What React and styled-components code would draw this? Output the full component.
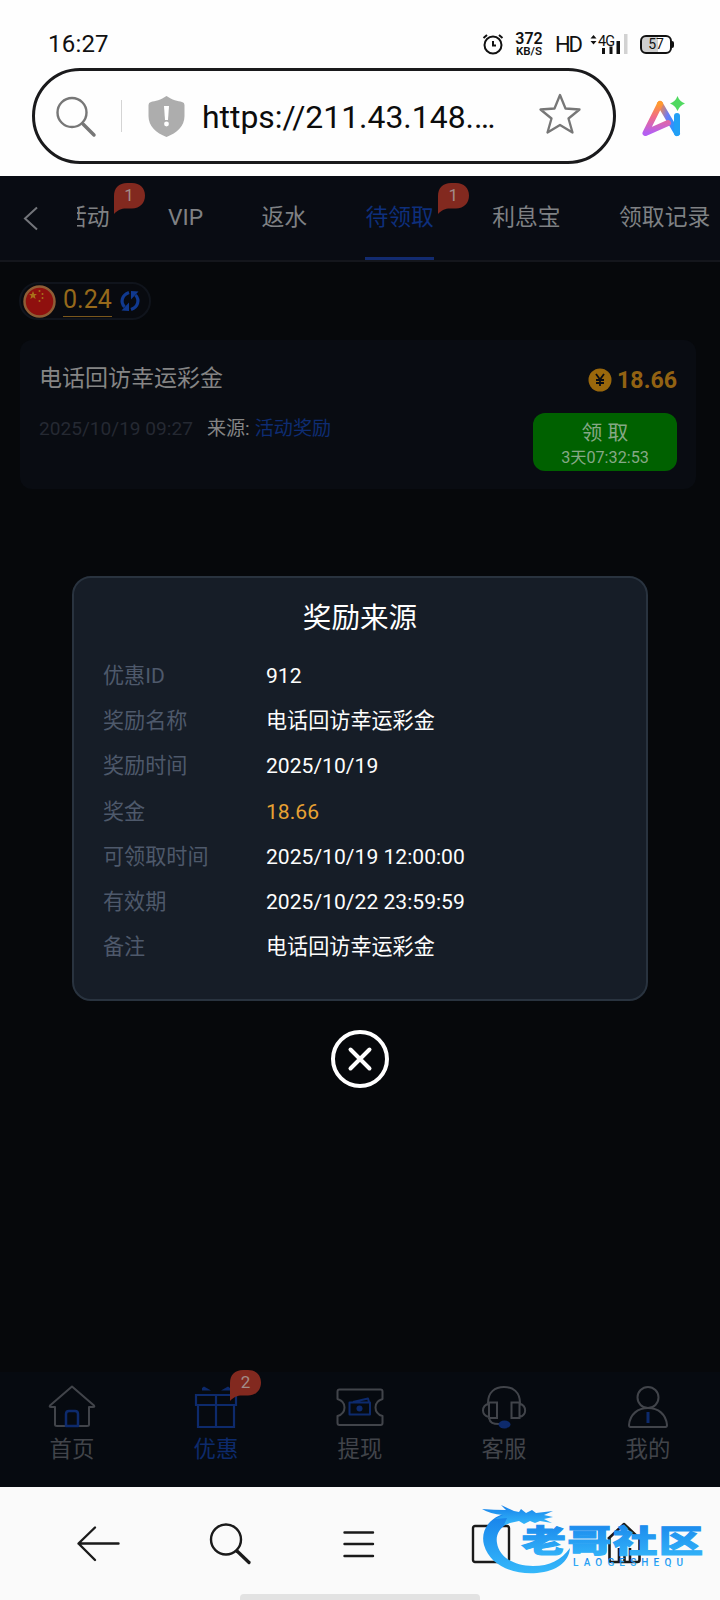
import styled, { createGlobalStyle } from "styled-components"

const GlobalStyle = createGlobalStyle`
    *{
        box-sizing: border-box;
    }
    body{
        margin: 0;
        background-color: #060709;
        font-family: Roboto, "Noto Sans CJK SC", sans-serif;
    }
    svg{
        display: block;
        overflow: visible;
    }
`

const Container = styled.div`
    width: 720px;
    height: 1600px;
    display: flex;
    flex-direction: column;
    overflow: hidden;
    position: relative;
`

/* phone status bar */
const StatusBar = styled.div`
    height: 68px;
    padding: 20px 46px 0 48px;
    display: flex;
    align-items: center;
    justify-content: space-between;
    background-color: #fefefe;
    color: #111;
`
const Clock = styled.div`
    font-size: 24px;
    letter-spacing: 0.2px;
`
const StatusIcons = styled.div`
    display: flex;
    align-items: center;
`
const Speed = styled.div`
    width: 28px;
    margin: 0 12px;
    text-align: center;
    font-size: 16px;
    font-weight: 600;
    line-height: 13px;
    small{
        display: block;
        font-size: 11.5px;
        line-height: 12px;
        white-space: nowrap;
    }
`
const Hd = styled.div`
    width: 26px;
    font-size: 22px;
    letter-spacing: -2.2px;
    margin-right: 9px;
`
const Battery = styled.div`
    width: 32px;
    height: 19px;
    margin-left: 12px;
    margin-right: 2px;
    border: 2px solid #111;
    border-radius: 6px;
    background: linear-gradient(90deg, #cfcfcf 57%, #fefefe 57%);
    font-size: 14px;
    line-height: 15px;
    text-align: center;
    position: relative;
    &:after{
        content: "";
        position: absolute;
        right: -4px;
        top: 4px;
        width: 2px;
        height: 7px;
        border-radius: 0 2px 2px 0;
        background-color: #111;
    }
`

/* browser address bar */
const AddressBar = styled.div`
    height: 108px;
    padding: 0 32px;
    display: flex;
    align-items: flex-start;
    background-color: #fefefe;
`
const UrlBox = styled.div`
    width: 584px;
    height: 96px;
    padding: 0 32px 0 20px;
    display: flex;
    align-items: center;
    border: 3px solid #1a1a1c;
    border-radius: 48px;
    svg:last-child{
        margin-bottom: 4px;
    }
`
const Divider = styled.div`
    width: 1px;
    height: 32px;
    margin: 0 26px 0 25px;
    background-color: #d4d4d4;
`
const Url = styled.div`
    flex: 1;
    margin-left: 17px;
    padding-top: 1px;
    font-size: 31.9px;
    line-height: 40px;
    color: #0c0c0c;
    white-space: nowrap;
`
const AiLogo = styled.div`
    margin: 28px 0 0 26px;
`

/* web page */
const Page = styled.div`
    height: 1311px;
    display: flex;
    flex-direction: column;
    position: relative;
    background-color: #06080b;
`
const TopBar = styled.div`
    height: 86px;
    display: flex;
    border-bottom: 2px solid #14161c;
    background-color: #090c13;
`
const BackButton = styled.div`
    width: 77px;
    padding: 31px 0 0 23px;
`
const Tabs = styled.div`
    flex: 1;
    display: flex;
    gap: 58.4px;
    padding-right: 10px;
    overflow: hidden;
`
const Tab = styled.div`
    flex: none;
    height: 84px;
    position: relative;
    margin-left: ${(props) => props.$shift || 0}px;
    font-size: 22.8px;
    line-height: 84px;
    white-space: nowrap;
    color: ${(props) => (props.$active ? "#0e2f7c" : "#7f8184")};
    border-bottom: 3px solid ${(props) => (props.$active ? "#122b70" : "transparent")};
`
const BadgeBox = styled.div`
    position: absolute;
    left: ${(props) => props.$left};
    top: ${(props) => props.$top}px;
    width: 31px;
    height: 31px;
    line-height: 0;
    color: #a38c89;
    svg{
        position: absolute;
        left: 0;
        top: 0;
    }
    span{
        display: block;
        position: relative;
        text-align: center;
        font-size: 17px;
        line-height: 25px;
    }
`
const Wallet = styled.div`
    width: 132px;
    height: 38px;
    margin: 20px 0 0 19px;
    padding-left: 2px;
    display: flex;
    align-items: center;
    border: 2px solid #10141c;
    border-radius: 19px;
    background-color: #080a0f;
`
const Balance = styled.div`
    margin: 0 8px 0 7px;
    height: 32px;
    font-size: 25px;
    line-height: 30px;
    color: #96691b;
    border-bottom: 1px solid #7a571c;
`
const Card = styled.div`
    width: 676px;
    height: 149px;
    margin: 20px 0 0 20px;
    padding: 0 19px;
    display: flex;
    justify-content: space-between;
    border-radius: 12px;
    background-color: #090c12;
`
const CardTitle = styled.div`
    margin-top: 22px;
    font-size: 23px;
    line-height: 34px;
    color: #858585;
`
const CardMeta = styled.div`
    display: flex;
    margin-top: 19px;
    font-size: 19.1px;
    line-height: 28px;
    color: #252932;
    span{
        margin: 0 5px 0 14px;
        color: #858585;
    }
    a{
        color: #0e2c72;
    }
`
const CardSide = styled.div`
    display: flex;
    flex-direction: column;
    align-items: flex-end;
`
const Amount = styled.div`
    display: flex;
    align-items: center;
    gap: 5px;
    height: 30px;
    margin-top: 24px;
    padding-top: 1px;
    font-size: 23.2px;
    font-weight: 700;
    color: #926212;
`
const ClaimButton = styled.button`
    width: 144px;
    height: 58px;
    margin-top: 19px;
    padding: 4px 0 0;
    border: none;
    border-radius: 12px;
    background-color: #006100;
    font-family: inherit;
    font-size: 20.8px;
    line-height: 27px;
    color: #86a886;
    small{
        display: block;
        font-size: 16.2px;
        line-height: 22px;
    }
`

/* reward dialog */
const Modal = styled.div`
    position: absolute;
    left: 72px;
    top: 400px;
    width: 576px;
    display: flex;
    flex-direction: column;
    align-items: center;
`
const Dialog = styled.div`
    width: 100%;
    height: 425px;
    padding: 21px 29px 0;
    border: 2px solid #29333f;
    border-radius: 19px;
    background-color: #161d27;
`
const DialogTitle = styled.div`
    height: 55px;
    font-size: 28.6px;
    line-height: 38px;
    text-align: center;
    color: #fff;
`
const Row = styled.div`
    display: flex;
    height: 45.2px;
    font-size: 21.1px;
    line-height: 44.6px;
`
const Label = styled.div`
    width: 163px;
    color: #4e596b;
`
const Value = styled.div`
    color: ${(props) => (props.$gold ? "#e8a233" : "#fdfdfd")};
`
const CloseButton = styled.div`
    margin-top: 28px;
`

/* site navigation */
const SiteNav = styled.div`
    height: 115px;
    margin-top: auto;
    display: flex;
    background-color: #060a10;
`
const NavItem = styled.div`
    width: 144px;
    padding-top: 13px;
    position: relative;
    display: flex;
    flex-direction: column;
    align-items: center;
    font-size: 22.4px;
    line-height: 30px;
    color: ${(props) => (props.$active ? "#0d2a6c" : "#41444a")};
    svg + div{
        margin-top: 6px;
    }
`

/* browser toolbar */
const Toolbar = styled.div`
    height: 113px;
    position: relative;
    display: flex;
    flex-direction: column;
    justify-content: space-between;
    align-items: center;
    background-color: #fafafa;
`
const ToolbarIcons = styled.div`
    width: 100%;
    padding: 34px 0 0 77px;
    display: grid;
    grid-template-columns: 132px 133px 129px 136px auto;
`
const HomeIndicator = styled.div`
    width: 240px;
    height: 6px;
    border-radius: 4px 4px 0 0;
    background-color: #e2e2e2;
`
const Watermark = styled.div`
    position: absolute;
    left: 460px;
    top: 3px;
`

const tabs = [
  { name: "活动", badge: 1, shift: -13 },
  { name: "VIP" },
  { name: "返水" },
  { name: "待领取", badge: 1, active: true },
  { name: "利息宝" },
  { name: "领取记录" },
]

const rows = [
  { label: "优惠ID", value: "912" },
  { label: "奖励名称", value: "电话回访幸运彩金" },
  { label: "奖励时间", value: "2025/10/19" },
  { label: "奖金", value: "18.66", gold: true },
  { label: "可领取时间", value: "2025/10/19 12:00:00" },
  { label: "有效期", value: "2025/10/22 23:59:59" },
  { label: "备注", value: "电话回访幸运彩金" },
]

const Badge = ({ left, top, children }) => (
  <BadgeBox $left={left} $top={top}>
    <svg width="31" height="32" fill="#82291f">
      <path d="M0 13C0 5 5 0 13 0H18C26 0 31 5 31 12.500C31 20 26 25.500 18 25.500H12C7 25.500 4 27 0 31Z" />
    </svg>
    <span>{children}</span>
  </BadgeBox>
)

const HomeIcon = () => (
  <svg width="48" height="43" fill="none" stroke="#41444a" strokeWidth="2" strokeLinejoin="round">
    <path d="M24 1.500L2 20.500Q1 22 3 22H7V39.500Q7 41 9 41H39Q41 41 41 39.500V22H45Q47 22 46 20.500Z" />
    <path d="M18 41V29Q18 26 21 26H27Q30 26 30 29V41Z" stroke="#0d2a6c" strokeWidth="2.500" />
  </svg>
)

const GiftIcon = () => (
  <svg width="44" height="43" fill="none" stroke="#0d2a6c" strokeWidth="2.200">
    <path d="M2 10H42V20H2ZM4 20V42H40V20M22 10V42" />
    <path d="M8 5.500V3L10 1.500L17 5.500ZM36 5.500V3L34 1.500L27 5.500Z" fill="#0d2a6c" stroke="none" />
  </svg>
)

const TicketIcon = () => (
  <svg width="48" height="43" fill="none" stroke="#41444a" strokeWidth="2" strokeLinejoin="round">
    <path d="M3.500 4.500H44.500Q46.500 4.500 46.500 6.500V14Q39.500 16 39.500 22.500Q39.500 29 46.500 31V38Q46.500 40 44.500 40H3.500Q1.500 40 1.500 38V31Q8.500 29 8.500 22.500Q8.500 16 1.500 14V6.500Q1.500 4.500 3.500 4.500Z" />
    <g stroke="#0d2a6c">
      <path d="M13.500 17.500H34V29.500H13.500ZM17 17L32 13.500L33 17" />
      <circle cx="23.500" cy="23.500" r="3" fill="#0d2a6c" stroke="none" />
    </g>
  </svg>
)

const ServiceIcon = () => (
  <svg width="44" height="43" fill="none" stroke="#41444a" strokeWidth="2">
    <path d="M6 18C6 7 13 2 22 2S38 7 38 18M7 33C8 38 11 39 17 39" />
    <path d="M7 17.500H15V33H7ZM29.500 17.500H37.500V33H29.500ZM7 18.500C-1 21 -1 30 7 32M37.500 18.500C45 21 45 30 37.500 32" />
    <ellipse cx="22.500" cy="39.500" rx="6" ry="4" fill="#0d2a6c" stroke="none" />
  </svg>
)

const UserIcon = () => (
  <svg width="40" height="43" fill="none" stroke="#41444a" strokeWidth="2">
    <circle cx="20" cy="12.500" r="10.500" />
    <path d="M2.500 42Q1 42 1 40C2 29 10 23 20 23S38 29 39 40Q39 42 37.500 42Z" strokeLinejoin="round" />
    <path d="M20 27V38" stroke="#0d2a6c" strokeWidth="3" />
  </svg>
)

const nav = [
  { name: "首页", icon: <HomeIcon /> },
  { name: "优惠", icon: <GiftIcon />, badge: 2, active: true },
  { name: "提现", icon: <TicketIcon /> },
  { name: "客服", icon: <ServiceIcon /> },
  { name: "我的", icon: <UserIcon /> },
]

const Status = () => (
  <StatusBar>
    <Clock>16:27</Clock>
    <StatusIcons>
      <svg width="20" height="20" fill="none" stroke="#111" strokeWidth="2">
        <circle cx="10" cy="11" r="8.500" />
        <path d="M10 7V11.500H13M0.500 4L4 1M19.500 4L16 1" />
      </svg>
      <Speed>
        372<small>KB/S</small>
      </Speed>
      <Hd>HD</Hd>
      <svg width="38" height="20" fill="#111">
        <path d="M0.500 4.500L3.500 1L6.500 4.500ZM0.500 7L3.500 10.500L6.500 7Z" />
        <text x="8" y="11.500" fontSize="14.500" letterSpacing="-1">4G</text>
        <rect x="12" y="14" width="3" height="6" />
        <rect x="19.500" y="12.500" width="3" height="7.500" />
        <rect x="26.500" y="7" width="3.500" height="13" />
        <rect x="34" y="0" width="3.500" height="20" fill="#d2d2d2" />
      </svg>
      <Battery>57</Battery>
    </StatusIcons>
  </StatusBar>
)

const Address = () => (
  <AddressBar>
    <UrlBox>
      <svg width="41" height="41" fill="none" stroke="#777" strokeWidth="2.400" strokeLinecap="round">
        <circle cx="17" cy="16.500" r="14.500" />
        <path d="M28 28L39 39" strokeWidth="3.500" />
      </svg>
      <Divider />
      <svg width="37" height="41" fill="#adadad">
        <path d="M18.500 0C13 4 7 5 3 6Q0.500 6.500 0.500 9V20C0.500 30 8 37 18.500 41C29 37 36.500 30 36.500 20V9Q36.500 6.500 34 6C30 5 24 4 18.500 0Z" />
        <path d="M16 10H21L20 24H17Z" fill="#fff" />
        <circle cx="18.500" cy="28" r="2.400" fill="#fff" />
      </svg>
      <Url>https://211.43.148.…</Url>
      <svg width="42" height="42" fill="none" stroke="#777" strokeWidth="2.300" strokeLinejoin="round">
        <path d="M21 2L26.500 15.500L40.500 16.500L29.500 25.500L33.500 39.500L21 32L8.500 39.500L12.500 25.500L1.500 16.500L15.500 15.500Z" />
      </svg>
    </UrlBox>
    <AiLogo>
      <svg width="43" height="42">
        <defs>
          <linearGradient id="ai" x1="0.300" y1="0" x2="0.300" y2="1">
            <stop offset="0" stopColor="#ff9a2e" />
            <stop offset="0.450" stopColor="#f06a8a" />
            <stop offset="1" stopColor="#b45ff2" />
          </linearGradient>
          <linearGradient id="aiBlue" x1="0" y1="0" x2="1" y2="0.600">
            <stop offset="0" stopColor="#ff8a3a" />
            <stop offset="0.500" stopColor="#6b7bf5" />
            <stop offset="1" stopColor="#1f98ff" />
          </linearGradient>
        </defs>
        <g fill="none" strokeWidth="6" strokeLinecap="round" strokeLinejoin="round">
          <path d="M18 8L35 37" stroke="url(#aiBlue)" />
          <path d="M35 37V20" stroke="#22a0f5" />
          <path d="M18 8L3.500 37L26 27" stroke="url(#ai)" />
        </g>
        <path d="M35.500 0Q37.500 5.500 43 7.500Q37.500 9.500 35.500 15Q33.500 9.500 28 7.500Q33.500 5.500 35.500 0Z" fill="#50d960" />
      </svg>
    </AiLogo>
  </AddressBar>
)

const RewardModal = () => (
  <Modal>
    <Dialog>
      <DialogTitle>奖励来源</DialogTitle>
      {rows.map((row) => (
        <Row key={row.label}>
          <Label>{row.label}</Label>
          <Value $gold={row.gold}>{row.value}</Value>
        </Row>
      ))}
    </Dialog>
    <CloseButton>
      <svg width="60" height="60" fill="none" stroke="#fff" strokeWidth="4" strokeLinecap="round">
        <circle cx="30" cy="30" r="27" />
        <path d="M20.500 20.500L39.500 39.500M39.500 20.500L20.500 39.500" />
      </svg>
    </CloseButton>
  </Modal>
)

const App = () => {
  return (
    <Container>
      <GlobalStyle />
      <Status />
      <Address />
      <Page>
        <TopBar>
          <BackButton>
            <svg width="15" height="24" fill="none" stroke="#73757a" strokeWidth="2">
              <path d="M14 0.500L2 11.500L14 22.500" />
            </svg>
          </BackButton>
          <Tabs>
            {tabs.map((tab) => (
              <Tab key={tab.name} $active={tab.active} $shift={tab.shift}>
                {tab.name}
                {tab.badge && <Badge left="calc(100% + 4px)" top={7}>{tab.badge}</Badge>}
              </Tab>
            ))}
          </Tabs>
        </TopBar>
        <Wallet>
          <svg width="33" height="33">
            <circle cx="16.500" cy="16.500" r="15" fill="#8f100e" stroke="#8f5d35" strokeWidth="2.500" />
            <path d="M10 6L11.200 9H14L11.800 10.800L12.600 14L10 12.200L7.400 14L8.200 10.800L6 9H8.800Z" fill="#a8711a" />
            <g fill="#a8711a">
              <circle cx="16.500" cy="6" r="1" />
              <circle cx="19.500" cy="9" r="1" />
              <circle cx="19.500" cy="13" r="1" />
              <circle cx="16.500" cy="16" r="1" />
            </g>
          </svg>
          <Balance>0.24</Balance>
          <svg width="20" height="22" fill="none" stroke="#10398f" strokeWidth="3.200">
            <path d="M9 2.500C2 5 0 12 4.500 17M11 19.500C18 17 20 10 15.500 5" />
            <path d="M1.500 20.500L9 21V12.500ZM18.500 1.500L11 1V9.500Z" fill="#10398f" stroke="none" />
          </svg>
        </Wallet>
        <Card>
          <div>
            <CardTitle>电话回访幸运彩金</CardTitle>
            <CardMeta>
              2025/10/19 09:27
              <span>来源:</span>
              <a>活动奖励</a>
            </CardMeta>
          </div>
          <CardSide>
            <Amount>
              <svg width="24" height="24" fill="none">
                <circle cx="12" cy="12" r="11.500" fill="#9a680c" />
                <path d="M8 6L12 11.500L16 6M12 11V18M8 12H16M8 15H16" stroke="#090c12" strokeWidth="1.800" />
              </svg>
              18.66
            </Amount>
            <ClaimButton>
              领 取<small>3天07:32:53</small>
            </ClaimButton>
          </CardSide>
        </Card>
        <SiteNav>
          {nav.map((item) => (
            <NavItem key={item.name} $active={item.active}>
              {item.icon}
              <div>{item.name}</div>
              {item.badge && <Badge left="86px" top={-2}>{item.badge}</Badge>}
            </NavItem>
          ))}
        </SiteNav>
        <RewardModal />
      </Page>
      <Toolbar>
        <ToolbarIcons>
          <svg width="43" height="44" fill="none" stroke="#1a1a1a" strokeWidth="2.400" strokeLinecap="round" strokeLinejoin="round">
            <path d="M41.500 22.500H1.500L18 6.500M1.500 22.500L18 39" />
          </svg>
          <svg width="42" height="44" fill="none" stroke="#1a1a1a" strokeWidth="2.400" strokeLinecap="round">
            <circle cx="17" cy="18.500" r="15" />
            <path d="M28 30L40 41.500" strokeWidth="3.300" />
          </svg>
          <svg width="32" height="44" fill="none" stroke="#1a1a1a" strokeWidth="2.400" strokeLinecap="round">
            <path d="M2.500 11.500H31M2.500 23H31M2.500 35H31" />
          </svg>
          <svg width="40" height="44" fill="none" stroke="#1a1a1a" strokeWidth="2.400">
            <rect x="2" y="5" width="36" height="36" rx="2" />
            <text x="20" y="28" fontSize="17" textAnchor="middle" fill="#1a1a1a" stroke="none">3</text>
          </svg>
          <svg width="36" height="44" fill="none" stroke="#1a1a1a" strokeWidth="2.600" strokeLinejoin="round">
            <path d="M1 18L17 3L33 18M2.500 17V39Q2.500 41 4.500 41H30.500Q32.500 41 32.500 39V17M12 41V27M17.500 41V27M23 41V27" />
          </svg>
        </ToolbarIcons>
        <HomeIndicator />
        <Watermark>
          <svg width="250" height="100">
            <defs>
              <linearGradient id="wm" x1="0" y1="0" x2="0" y2="1">
                <stop offset="0" stopColor="#1680ea" />
                <stop offset="1" stopColor="#35b8fa" />
              </linearGradient>
            </defs>
            <g fill="url(#wm)">
              <path d="M50 22C30 26 20 40 24 55C30 76 54 85 77 83C97 81 109 72 110 58C101 70 90 76 73 76C54 76 39 67 37 53C35 42 43 33 60 29Z" />
              <path d="M22 19Q34 20 46 20L41 15L54 21L59 22L61 19L66 23L72 20L76 23L93 21L84 25L93 27L84 29L92 33L80 31L75 33L70 31L64 34L59 31L50 33L44 35L47 28L35 29L43 25Q30 24 22 19Z" />
              <text
                transform="translate(61.500 62) scale(1.430 1)"
                fontFamily="Noto Sans CJK SC"
                fontSize="31"
                fontWeight="900"
                letterSpacing="1"
                stroke="url(#wm)"
                strokeWidth="1"
              >
                老哥社区
              </text>
              <text x="113" y="76" fontSize="10" fontWeight="500" textLength="110">LAOGESHEQU</text>
            </g>
          </svg>
        </Watermark>
      </Toolbar>
    </Container>
  )
}

export default App
